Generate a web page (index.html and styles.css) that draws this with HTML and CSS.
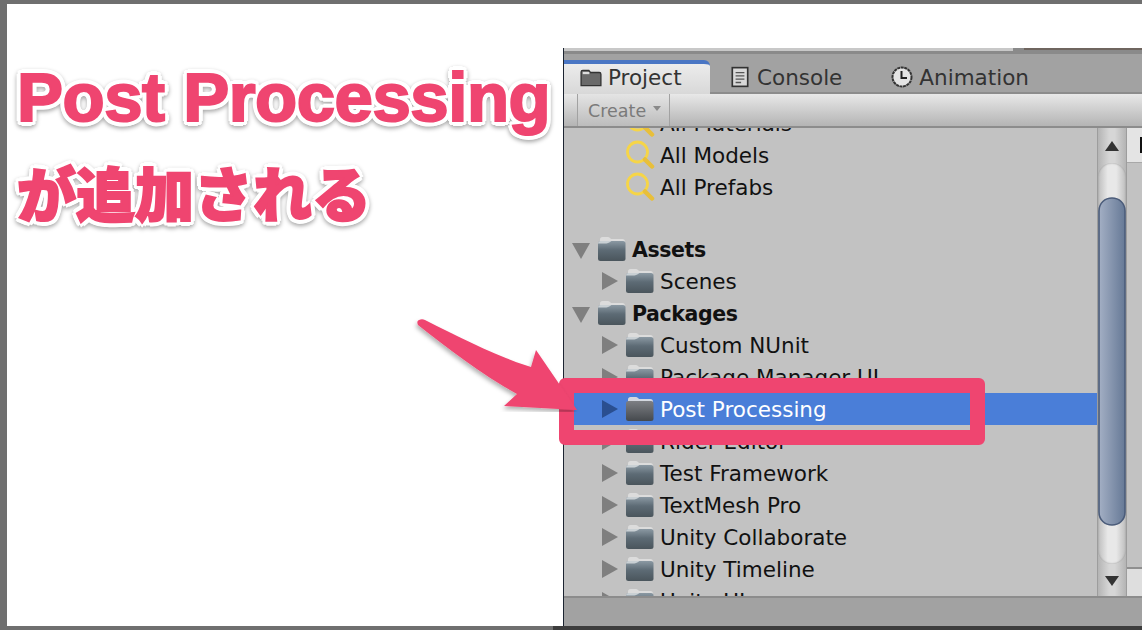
FILE: index.html
```html
<!DOCTYPE html>
<html>
<head>
  <title>Post Processing</title>
  <link rel="stylesheet" href="styles.css">
</head>
<body>
  <svg class="defs" width="0" height="0">
    <defs>
      <linearGradient id="folderBody" x1="0" y1="0" x2="0" y2="1">
        <stop offset="0" stop-color="#8b99a3"/>
        <stop offset="0.45" stop-color="#5d6b75"/>
        <stop offset="1" stop-color="#4a555c"/>
      </linearGradient>
      <linearGradient id="folderDark" x1="0" y1="0" x2="0" y2="1">
        <stop offset="0" stop-color="#7d7f84"/>
        <stop offset="1" stop-color="#45494d"/>
      </linearGradient>
      <linearGradient id="thumbFill" x1="0" y1="0" x2="1" y2="0">
        <stop offset="0" stop-color="#a3afc4"/>
        <stop offset="1" stop-color="#667996"/>
      </linearGradient>
      <symbol id="folder" viewBox="0 0 29 26">
        <path d="M3 6V3.500C3 2 4 1 5.500 1H11C12.500 1 13 2 14 3H25.500C27 3 28 4 28 5.500V8H3Z" fill="#dcdcdc"/>
        <rect x="1" y="5" width="27.500" height="20" rx="2.500" fill="url(#folderBody)"/>
        <path d="M1 7.500C1 6 2 5 3.500 5H14.500C12 7 10 7.500 8 7.500Z" fill="#c9d0d4"/>
      </symbol>
      <symbol id="folderSel" viewBox="0 0 29 26">
        <path d="M3 6V3.500C3 2 4 1 5.500 1H11C12.500 1 13 2 14 3H25.500C27 3 28 4 28 5.500V8H3Z" fill="#d4d8e0"/>
        <rect x="1" y="5" width="27.500" height="20" rx="2.500" fill="url(#folderDark)"/>
      </symbol>
      <symbol id="search" viewBox="0 0 30 30">
        <circle cx="12.500" cy="12" r="10" fill="none" stroke="#f6d547" stroke-width="2.800"/>
        <path d="M20 19.500L27 26.500" stroke="#e8bf3a" stroke-width="4.500" stroke-linecap="round"/>
      </symbol>
    </defs>
  </svg>

  <div class="screen">
    <main class="sheet">
      <section class="note">
        <h1 class="note-title">Post Processing</h1>
        <p class="note-sub">が追加される</p>
      </section>

      <section class="panel">
        <div class="top-strip">
          <span class="strip-left"></span>
          <span class="strip-right"></span>
        </div>

        <div class="tabs">
          <div class="tab active">
            <svg class="tab-icon" viewBox="0 0 20 18"><path d="M1 16V3.500C1 2.500 1.500 2 2.500 2H8L9.500 4H17.500C18.500 4 19 4.500 19 5.500V16Z" fill="#6a6a6a" stroke="#333" stroke-width="1.200"/><rect x="2.500" y="3.500" width="6" height="2" fill="#ddd"/></svg>
            Project
          </div>
          <div class="tab">
            <svg class="tab-icon" viewBox="0 0 20 20"><rect x="3" y="1.500" width="14" height="17" fill="#d8d8d8" stroke="#333" stroke-width="1.500"/><path d="M6 6H14M6 9H14M6 12H14M6 15H11" stroke="#555" stroke-width="1.200"/></svg>
            Console
          </div>
          <div class="tab">
            <svg class="tab-icon" viewBox="0 0 22 22"><circle cx="11" cy="11" r="9.500" fill="#e4e4e4" stroke="#333" stroke-width="2" stroke-dasharray="3 .6"/><path d="M10.500 5V12H16" fill="none" stroke="#222" stroke-width="2"/></svg>
            Animation
          </div>
        </div>

        <div class="toolbar">
          <button class="create-btn">Create <span class="caret"></span></button>
        </div>

        <div class="content">
          <div class="tree">
            <ul class="tree-list">
              <li class="row child"><svg class="search-icon"><use href="#search"/></svg>All Materials</li>
              <li class="row child"><svg class="search-icon"><use href="#search"/></svg>All Models</li>
              <li class="row child"><svg class="search-icon"><use href="#search"/></svg>All Prefabs</li>
              <li class="row spacer"></li>
              <li class="row root"><i class="arrow down"></i><svg class="folder"><use href="#folder"/></svg><span class="root-label">Assets</span></li>
              <li class="row child"><i class="arrow"></i><svg class="folder"><use href="#folder"/></svg>Scenes</li>
              <li class="row root"><i class="arrow down"></i><svg class="folder"><use href="#folder"/></svg><span class="root-label">Packages</span></li>
              <li class="row child"><i class="arrow"></i><svg class="folder"><use href="#folder"/></svg>Custom NUnit</li>
              <li class="row child"><i class="arrow"></i><svg class="folder"><use href="#folder"/></svg>Package Manager UI</li>
              <li class="row child selected"><i class="arrow"></i><svg class="folder"><use href="#folderSel"/></svg>Post Processing</li>
              <li class="row child"><i class="arrow"></i><svg class="folder"><use href="#folder"/></svg>Rider Editor</li>
              <li class="row child"><i class="arrow"></i><svg class="folder"><use href="#folder"/></svg>Test Framework</li>
              <li class="row child"><i class="arrow"></i><svg class="folder"><use href="#folder"/></svg>TextMesh Pro</li>
              <li class="row child"><i class="arrow"></i><svg class="folder"><use href="#folder"/></svg>Unity Collaborate</li>
              <li class="row child"><i class="arrow"></i><svg class="folder"><use href="#folder"/></svg>Unity Timeline</li>
              <li class="row child"><i class="arrow"></i><svg class="folder"><use href="#folder"/></svg>Unity UI</li>
            </ul>
          </div>

          <div class="scrollbar">
            <i class="scroll-up"></i>
            <div class="track">
              <svg class="thumb" preserveAspectRatio="none" viewBox="0 0 28 329">
                <path d="M1 14C1 6 7 1 14 1S27 6 27 14V315C27 323 21 328 14 328S1 323 1 315Z" fill="url(#thumbFill)" stroke="#4b5c7a" stroke-width="1.600"/>
              </svg>
            </div>
            <i class="scroll-down"></i>
          </div>

          <div class="side">
            <div class="side-head"><i class="side-mark"></i></div>
            <div class="side-foot"></div>
          </div>
        </div>

        <div class="statusbar"></div>

        <!-- callout over the tree -->
        <div class="frame"></div>
      </section>
    </main>
    <div class="bottom-edge"></div>

    <svg class="callout-arrow" viewBox="0 0 170 100" width="170" height="100">
      <defs>
        <filter id="arrowShadow" x="-10%" y="-10%" width="120%" height="130%">
          <feDropShadow dx="-1" dy="3" stdDeviation="2" flood-color="#000" flood-opacity=".3"/>
        </filter>
      </defs>
      <path d="M8 8C10 7 12 7 14 8C50 26 85 44 120 55L125 38L166 98L93 94L106 82C70 62 35 35 7 13C6 11 6 9 8 8Z" fill="#ef4570" filter="url(#arrowShadow)"/>
    </svg>
  </div>
</body>
</html>
```

FILE: styles.css
```css
* {
  box-sizing: border-box;
}

body {
  margin: 0;
  width: 1142px;
  height: 630px;
  overflow: hidden;
  background-color: #6f6f6f;
  font-family: "DejaVu Sans", Verdana, sans-serif;
}

.defs {
  position: absolute;
}

.screen {
  position: relative;
  height: 630px;
  padding-top: 4px;
}

.sheet {
  display: flex;
  height: 622px;
  margin-left: 7px;
  background-color: #fff;
}

.bottom-edge {
  height: 4px;
  margin-left: 553px;
  background-color: #3d3d3d;
}

/* Left side caption */
.note {
  width: 556px;
  padding: 61px 0 0 10px;
  flex-shrink: 0;
}

.note-title,
.note-sub {
  margin: 0;
  color: #ef4570;
  white-space: nowrap;
  -webkit-text-stroke: 2px #ef4570;
  text-shadow:
    5px 0 0 #fff, -5px 0 0 #fff, 0 5px 0 #fff, 0 -5px 0 #fff,
    4px 3px 0 #fff, -4px 3px 0 #fff, 4px -3px 0 #fff, -4px -3px 0 #fff,
    3px 4px 0 #fff, -3px 4px 0 #fff, 3px -4px 0 #fff, -3px -4px 0 #fff;
  filter: drop-shadow(0 2px 2px rgba(0, 0, 0, 0.35));
}

.note-title {
  font-family: "Liberation Sans", Arial, sans-serif;
  font-size: 69px;
  font-weight: bold;
  line-height: 66px;
  letter-spacing: -0.5px;
}

.note-sub {
  margin-top: 31px;
  font-family: "Noto Sans CJK JP", sans-serif;
  font-size: 59px;
  font-weight: 900;
  line-height: 60px;
}

/* Unity panel */
.panel {
  position: relative;
  display: flex;
  flex-direction: column;
  flex: 1;
  margin-top: 44px;
  border-left: 1px solid #1c2431;
  background-color: #a2a2a2;
}

.top-strip {
  display: flex;
  height: 6px;
  background-color: #8a8a8a;
}

.strip-left {
  width: 451px;
  height: 3px;
  background-color: #c8c8c8;
  border-right: 2px solid #8a8a8a;
}

.strip-right {
  width: 118px;
  height: 2px;
  margin-left: 9px;
  background-color: #6f655f;
}

.tabs {
  display: flex;
  height: 40px;
  border-bottom: 2px solid #8c8c8c;
  color: #333;
  font-size: 21.500px;
}

.tab {
  display: flex;
  align-items: center;
  gap: 6px;
  height: 34px;
  margin-top: 6px;
  padding-left: 16px;
}

.tab:nth-child(2) {
  margin-left: 3px;
}

.tab:nth-child(3) {
  margin-left: 33px;
}

.tab.active {
  position: relative;
  z-index: 1;
  width: 146px;
  padding-bottom: 3px;
  border-top: 4px solid #4a76c4;
  border-top-right-radius: 6px;
  background: linear-gradient(#ececec, #d8d8d8);
}

.tab-icon {
  width: 22px;
  height: 22px;
  flex-shrink: 0;
}

.toolbar {
  display: flex;
  height: 34px;
  padding-left: 13px;
  border-bottom: 2px solid #8c8c8c;
  background: linear-gradient(#e8e8e8, #b4b4b4);
}

.create-btn {
  display: flex;
  align-items: center;
  gap: 7px;
  width: 93px;
  height: 32px;
  padding: 2px 0 0 10px;
  border: none;
  border-left: 1px solid #a2a2a2;
  border-right: 1px solid #a2a2a2;
  background: linear-gradient(#e4e4e4, #bcbcbc);
  color: #7a7a7a;
  font-family: inherit;
  font-size: 17.500px;
}

.caret {
  width: 0;
  height: 0;
  margin-bottom: 6px;
  border-left: 4px solid transparent;
  border-right: 4px solid transparent;
  border-top: 5px solid #8a8a8a;
}

.content {
  display: flex;
  height: 468px;
  background-color: #c2c2c2;
}

.tree {
  flex: 1;
  min-width: 0;
  overflow: hidden;
}

.tree-list {
  list-style: none;
  margin: -21px 0 0;
  padding: 0;
  color: #111;
  font-size: 21.500px;
}

.row {
  position: relative;
  display: flex;
  align-items: center;
  height: 32px;
  white-space: nowrap;
}

.row.spacer {
  height: 30px;
}

.row.root {
  padding-left: 33px;
  font-size: 20.500px;
  font-weight: bold;
  letter-spacing: -0.4px;
}

.root-label {
  padding-top: 2px;
}

.row.child {
  padding-left: 61px;
}

.row.selected {
  background-color: #4a7ed8;
  color: #fff;
}

.row.selected .arrow {
  border-left-color: #2a4f90;
}

.folder {
  width: 29px;
  height: 26px;
  margin-right: 6px;
  flex-shrink: 0;
}

.search-icon {
  width: 30px;
  height: 30px;
  margin-right: 5px;
  flex-shrink: 0;
}

.arrow {
  position: absolute;
  left: 38px;
  top: 7px;
  width: 0;
  height: 0;
  border-top: 9px solid transparent;
  border-bottom: 9px solid transparent;
  border-left: 16px solid #7f7f7f;
}

.arrow.down {
  left: 8px;
  top: 10px;
  border-left: 9px solid transparent;
  border-right: 9px solid transparent;
  border-top: 16px solid #7f7f7f;
  border-bottom: none;
}

.scrollbar {
  display: flex;
  flex-direction: column;
  align-items: center;
  width: 30px;
  flex-shrink: 0;
  border-left: 1px solid #9d9d9d;
  border-right: 1px solid #9d9d9d;
  background: linear-gradient(90deg, #b4b4b4, #d6d6d6 40%, #d6d6d6 60%, #b4b4b4);
}

.scroll-up,
.scroll-down {
  width: 0;
  height: 0;
  flex-shrink: 0;
  border-left: 7px solid transparent;
  border-right: 7px solid transparent;
}

.scroll-up {
  margin: 13px 0 12px;
  border-bottom: 10px solid #333;
}

.scroll-down {
  margin: 12px 0 9px;
  border-top: 10px solid #333;
}

.track {
  display: flex;
  flex-direction: column;
  width: 28px;
  height: 401px;
  padding-top: 34px;
  border-radius: 14px;
  background: linear-gradient(90deg, #bdbdbd, #e8e8e8 35%, #e8e8e8 65%, #bdbdbd);
  box-shadow: inset 0 0 2px #8f8f8f;
}

.thumb {
  width: 28px;
  height: 329px;
}

.side {
  display: flex;
  flex-direction: column;
  justify-content: space-between;
  width: 15px;
  flex-shrink: 0;
}

.side-head {
  display: flex;
  align-items: center;
  justify-content: flex-end;
  height: 35px;
  border-bottom: 1px solid #a8a8a8;
  background-color: #e4e4e4;
}

.side-mark {
  width: 2px;
  height: 16px;
  background-color: #111;
}

.side-foot {
  height: 29px;
  border-top: 2px solid #8f8f8f;
  background-color: #dedede;
}

.statusbar {
  flex: 1;
  border-top: 2px solid #8c8c8c;
  background-color: #a2a2a2;
}

/* Pink callout drawn on top of the tree */
.frame {
  position: absolute;
  left: -5px;
  top: 330px;
  width: 426px;
  height: 67px;
  border: 15px solid #ef4570;
  border-radius: 6px;
}

.callout-arrow {
  position: absolute;
  left: 411px;
  top: 312px;
}
```
